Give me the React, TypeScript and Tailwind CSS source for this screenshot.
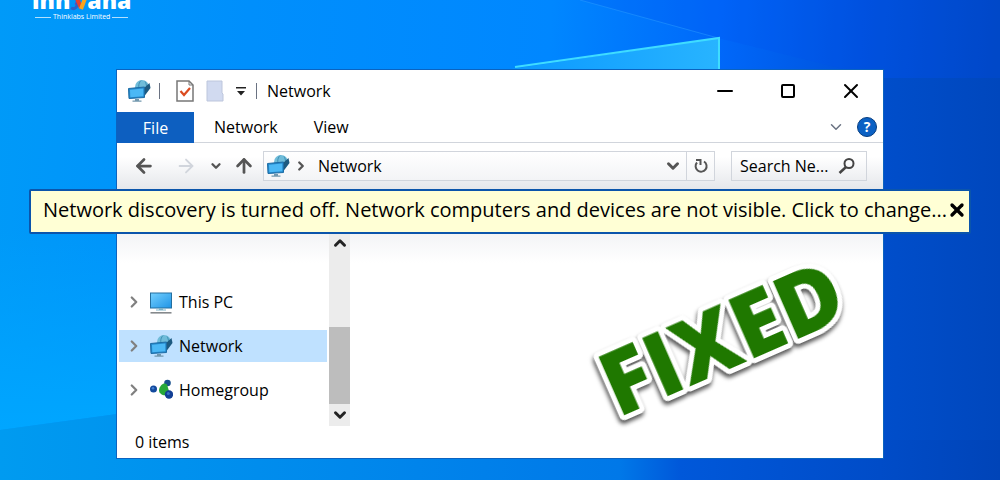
import { ArrowLeft, ArrowRight, ArrowUp, ChevronDown, ChevronRight, ChevronUp, Minus, X } from 'lucide-react';

type IconKind = 'pc' | 'network' | 'homegroup';

const TREE: { label: string; icon: IconKind; selected?: boolean }[] = [
  { label: 'This PC', icon: 'pc' },
  { label: 'Network', icon: 'network', selected: true },
  { label: 'Homegroup', icon: 'homegroup' },
];

function NetworkIcon() {
  return (
    <svg viewBox="0 0 24 24" className="size-6 shrink-0" aria-hidden="true">
      <circle cx="15" cy="8" r="7" fill="#6fbcd9" />
      <path d="M14 1.500c-3 3-3 8 0 12M18 2.500c2 3 2 7 0 11" fill="none" stroke="#3d8fb5" />
      <path d="M16 10l6.500-6 1 5-6 8z" fill="#1d5a80" />
      <path d="M1.500 9.500L17.500 8v10.500L2 19.500z" fill="#2386c8" stroke="#1d6da6" />
      <path d="M3 10.700l13.300-1.200v7.800L3.300 18.300z" fill="#4bb8f5" />
      <path d="M8 20h4v1.500h2.500v1.200H5.500v-1.200H8z" fill="#7298ae" />
    </svg>
  );
}

function PcIcon() {
  return (
    <svg viewBox="0 0 24 24" className="size-6 shrink-0" aria-hidden="true">
      <defs>
        <linearGradient id="screen" x1="0" y1="0" x2="1" y2="1">
          <stop stopColor="#74d0ff" />
          <stop offset="1" stopColor="#1f94e6" />
        </linearGradient>
      </defs>
      <rect x="1.500" y="3" width="21" height="15" fill="url(#screen)" stroke="#246f9f" />
      <path d="M10 18h4v1.500h3v1H7v-1h3z" fill="#7fb3c8" />
      <path d="M1.500 22h21v1.600h-21z" fill="#85898c" />
    </svg>
  );
}

function HomegroupIcon() {
  return (
    <svg viewBox="0 0 24 24" className="size-6 shrink-0" aria-hidden="true">
      <circle cx="4.500" cy="11" r="3.500" fill="#12499d" />
      <circle cx="18.500" cy="5" r="3.300" fill="#174f8c" />
      <path d="M10 12C11 7 15 4 18 6.500L20 13l-2 4c-4 1-8-1-8-5z" fill="#27a838" />
      <circle cx="20" cy="16.500" r="4.200" fill="#123f95" />
      <circle cx="4" cy="10.200" r="1.300" fill="#437fd0" />
      <circle cx="19.300" cy="15.500" r="1.500" fill="#386fc4" />
    </svg>
  );
}

const ICONS = { pc: PcIcon, network: NetworkIcon, homegroup: HomegroupIcon };

function Backdrop() {
  return (
    <svg
      viewBox="0 0 1000 480"
      preserveAspectRatio="none"
      className="absolute inset-0 -z-10 size-full"
      aria-hidden="true"
    >
      <defs>
        <linearGradient id="sky" gradientUnits="userSpaceOnUse" x1="0" y1="0" x2="1000" y2="60">
          <stop stopColor="#009af8" />
          <stop offset="0.25" stopColor="#008ffc" />
          <stop offset="0.55" stopColor="#0087ff" />
          <stop offset="0.72" stopColor="#0068fa" />
          <stop offset="0.86" stopColor="#0052dc" />
          <stop offset="1" stopColor="#0046be" />
        </linearGradient>
        <linearGradient id="floor" gradientUnits="userSpaceOnUse" x1="0" y1="0" x2="1000" y2="0">
          <stop stopColor="#009bf0" />
          <stop offset="0.35" stopColor="#0088ec" />
          <stop offset="0.62" stopColor="#0078e8" />
          <stop offset="0.68" stopColor="#0058da" />
          <stop offset="0.88" stopColor="#004cc8" />
          <stop offset="1" stopColor="#0044b8" />
        </linearGradient>
        <linearGradient id="right">
          <stop stopColor="#004ecb" />
          <stop offset="1" stopColor="#0047bd" />
        </linearGradient>
        <linearGradient id="pane">
          <stop stopColor="#0a98ff" />
          <stop offset="1" stopColor="#28b4ff" />
        </linearGradient>
        <linearGradient id="beam" x1="0" y1="0" x2="0" y2="1">
          <stop stopColor="#00a6ff" stopOpacity="0" />
          <stop offset="1" stopColor="#00a6ff" />
        </linearGradient>
      </defs>
      <path d="M0 0h1000v480H0z" fill="url(#sky)" />
      <path d="M580 0L718 38l162 40h120V0z" fill="#0050f0" opacity="0.2" />
      <path d="M880 78h120v402H880z" fill="url(#right)" />
      <path d="M580 0L718 38" stroke="#2a9dff" opacity="0.5" />
      <path d="M0 230h117v184L0 430z" fill="url(#beam)" />
      <path d="M0 430L117 414 200 440h800v40H0z" fill="url(#floor)" />
      <path d="M505 70L719 38v34z" fill="url(#pane)" />
      <path d="M515 67L719 38v34" fill="none" stroke="#3fdcff" strokeWidth="2" />
    </svg>
  );
}

function Logo() {
  return (
    <div className="flex w-fit flex-col items-center text-white">
      <div className="-mt-[13px] flex text-[23px] leading-[26px] font-extrabold">
        <span>inn</span>
        <svg viewBox="0 0 17 26" className="h-[26px] w-[17px]" aria-hidden="true">
          <path d="M1 9c5-1 8 4 5 9" fill="none" stroke="#7b3fa0" strokeWidth="3" />
          <path d="M1 21c4 2 6-1 7-5" fill="none" stroke="#2b62c9" strokeWidth="3" />
          <path d="M6 9l5 12" stroke="#e5432f" strokeWidth="4" />
          <path d="M16 9l-5 13" stroke="#f9a51a" strokeWidth="4" />
        </svg>
        <span>ana</span>
      </div>
      <div className="flex items-center gap-0.5 text-[7px] leading-[8px]">
        <span className="h-px w-4 bg-white/70" />
        Thinklabs Limited
        <span className="h-px w-4 bg-white/70" />
      </div>
    </div>
  );
}

function TitleBar() {
  return (
    <div className="flex h-[42px] items-center pl-2.5 text-[16px]">
      <NetworkIcon />
      <span className="mr-4 ml-2 h-4 w-px bg-gray-500" />
      <svg viewBox="0 0 18 22" className="h-[22px] w-[18px]" aria-hidden="true">
        <path d="M1 1h12l4 4v16H1z" fill="#fff" stroke="#777" strokeWidth="1.500" />
        <path d="M13 1v4h4" fill="none" stroke="#777" />
        <path d="M4.500 11l3.500 4 6-7" fill="none" stroke="#db4b20" strokeWidth="2.200" />
      </svg>
      <svg viewBox="0 0 18 22" className="ml-3 h-[22px] w-[18px]" aria-hidden="true">
        <path d="M1 1h15v12l1 1v7H1z" fill="#d1daf0" stroke="#bdc6dc" />
      </svg>
      <svg viewBox="0 0 10 10" className="ml-3 size-2.5" aria-hidden="true">
        <path d="M0 1h10v1.500H0zM1 5h8L5 9.500z" fill="#222" />
      </svg>
      <span className="mr-2.5 ml-2.5 h-4 w-px bg-gray-500" />
      <h1>Network</h1>
      <div className="mr-5 ml-auto flex gap-[39px]">
        <button type="button" aria-label="Minimize">
          <Minus size={24} strokeWidth={2} />
        </button>
        <button type="button" aria-label="Maximize">
          <svg viewBox="0 0 24 24" className="size-6" aria-hidden="true">
            <rect x="6" y="6" width="12" height="12" rx="1" fill="none" stroke="#000" strokeWidth="2" />
          </svg>
        </button>
        <button type="button" aria-label="Close">
          <X size={24} strokeWidth={2} />
        </button>
      </div>
    </div>
  );
}

function Ribbon() {
  return (
    <div className="flex h-[31px] items-stretch border-b border-gray-300 text-[16px]">
      <button type="button" className="-mb-px w-[77px] bg-[#0d5fc0] text-white">
        File
      </button>
      <button type="button" className="ml-5">
        Network
      </button>
      <button type="button" className="ml-9">
        View
      </button>
      <div className="mr-1.5 ml-auto flex items-center gap-3">
        <button type="button" aria-label="Expand ribbon">
          <ChevronDown size={18} className="text-gray-500" />
        </button>
        <button
          type="button"
          aria-label="Help"
          className="size-5 rounded-full border border-[#063d80] bg-[#0b61c4] text-[14px] leading-[18px] font-bold text-white"
        >
          ?
        </button>
      </div>
    </div>
  );
}

function AddressBar() {
  return (
    <div className="flex h-[46px] items-center bg-linear-to-b from-white from-30% to-gray-200 pr-4 pl-4 text-[16px]">
      <button type="button" aria-label="Back">
        <ArrowLeft size={22} strokeWidth={3} className="text-[#555]" />
      </button>
      <button type="button" aria-label="Forward" className="ml-5">
        <ArrowRight size={22} className="text-gray-300" />
      </button>
      <button type="button" aria-label="Recent locations" className="ml-3">
        <ChevronDown size={14} strokeWidth={4} className="text-[#555]" />
      </button>
      <button type="button" aria-label="Up" className="ml-2.5">
        <ArrowUp size={22} strokeWidth={3} className="text-[#555]" />
      </button>
      <div className="ml-2 flex h-[30px] min-w-0 flex-1 items-center border border-gray-300 bg-linear-to-b from-white to-gray-100 pl-0.5">
        <NetworkIcon />
        <ChevronRight size={14} strokeWidth={4} className="ml-1 text-[#555]" />
        <span className="ml-2.5">Network</span>
        <button type="button" aria-label="Previous locations" className="ml-auto px-1">
          <ChevronDown size={18} strokeWidth={4} className="text-[#555]" />
        </button>
        <button type="button" aria-label="Refresh" className="flex h-full w-7 items-center justify-center border-l border-gray-300">
          <svg viewBox="0 0 18 18" className="size-[18px]" aria-hidden="true">
            <path d="M12 4.500A5.500 5.500 0 1 1 5 5.500M4 3h4.500v5" fill="none" stroke="#555" strokeWidth="2" />
          </svg>
        </button>
      </div>
      <label className="ml-4 flex h-[30px] w-[136px] items-center border border-gray-300 pr-2.5 pl-2">
        <input
          type="text"
          aria-label="Search Network"
          placeholder="Search Ne..."
          className="min-w-0 flex-1 bg-transparent placeholder:text-black focus:outline-none"
        />
        <svg viewBox="0 0 18 18" className="size-[18px] shrink-0" aria-hidden="true">
          <circle cx="11" cy="6.500" r="4.500" fill="none" stroke="#444" strokeWidth="2" />
          <path d="M8 10l-6.500 6" stroke="#444" strokeWidth="2.500" />
        </svg>
      </label>
    </div>
  );
}

function InfoBar() {
  return (
    <div
      role="status"
      className="relative -mx-[88px] flex h-[45px] items-center rounded-xs border-2 border-[#0b55ab] bg-[#ffffd5] pr-3 pb-1 pl-3 text-[20px] whitespace-nowrap"
    >
      <a href="#change">Network discovery is turned off. Network computers and devices are not visible. Click to change...</a>
      <button type="button" aria-label="Dismiss" className="ml-auto">
        <X size={20} strokeWidth={4} />
      </button>
    </div>
  );
}

function NavPane() {
  return (
    <nav className="flex w-[233px] shrink-0 text-[16px]">
      <ul className="flex flex-1 flex-col gap-3 pt-[52px] pr-0.5 pl-0.5">
        {TREE.map(({ label, icon, selected }) => {
          const Icon = ICONS[icon];
          return (
            <li key={label}>
              <a
                href={`#${icon}`}
                className={`flex h-8 items-center pl-1.5 ${selected ? 'bg-[#bfe1ff]' : ''}`}
              >
                <ChevronRight size={18} strokeWidth={3} className="text-[#808080]" />
                <span className="mr-1.5 ml-1.5">
                  <Icon />
                </span>
                {label}
              </a>
            </li>
          );
        })}
      </ul>
      <div className="flex w-[21px] flex-col items-center bg-[#ececec]">
        <ChevronUp size={18} strokeWidth={4} className="text-[#222]" />
        <span className="mt-auto h-[77px] w-full bg-[#bdbdbd]" />
        <ChevronDown size={18} strokeWidth={4} className="my-0.5 text-[#222]" />
      </div>
    </nav>
  );
}

function FixedStamp() {
  return (
    <svg viewBox="0 0 280 184" className="mt-2 mr-4 h-[184px] w-[280px] overflow-visible" role="img" aria-label="Fixed">
      <text
        x="0"
        y="0"
        transform="translate(31 176) rotate(-23.700)"
        fontFamily="Open Sans, sans-serif"
        fontWeight="800"
        fontSize="88"
        fill="#1f7800"
        stroke="#fff"
        strokeWidth="10"
        strokeLinejoin="round"
        paintOrder="stroke"
        className="drop-shadow-[-2px_3px_2px_#000000aa]"
      >
        FIXED
      </text>
    </svg>
  );
}

export default function App() {
  return (
    <main className="relative isolate min-h-screen overflow-hidden px-[116px] pb-5 font-['Open_Sans',sans-serif] text-black">
      <Backdrop />
      <header className="-ml-[84px] h-[69px]">
        <Logo />
      </header>
      <section className="border border-[#0b63c0] bg-white">
        <TitleBar />
        <Ribbon />
        <AddressBar />
        <InfoBar />
        <div className="flex h-[192px] bg-linear-to-b from-gray-100 to-white to-15%">
          <NavPane />
          <div className="flex flex-1 justify-end">
            <FixedStamp />
          </div>
        </div>
        <footer className="flex h-8 items-center pl-[18px] text-[16px]">0 items</footer>
      </section>
    </main>
  );
}
